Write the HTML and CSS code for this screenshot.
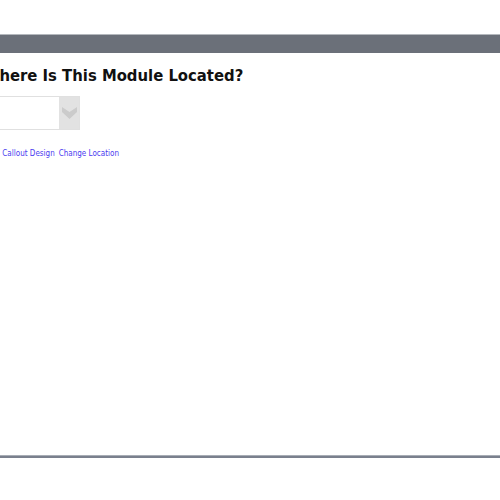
FILE: index.html
```html
<!DOCTYPE html>
<html lang="en">
<head>
    <meta charset="UTF-8">
    <title>Module Location</title>
    <link rel="stylesheet" href="styles.css">
</head>
<body>
    <div class="top-space"></div>
    <div class="bar"></div>
    <div class="content">
        <h2 class="title">Where Is This Module Located?</h2>
        <div class="select">
            <div class="select-field"></div>
            <div class="select-btn">
                <svg width="15" height="12" viewBox="0 0 15 12">
                    <path d="M0 0 L7.5 5 L15 0 L15 5 L7.5 12 L0 5 Z" fill="#cbcbcb"/>
                </svg>
            </div>
        </div>
        <div class="links">
            <a href="#">Edit</a>
            <a href="#">Callout Design</a>
            <a href="#">Change Location</a>
        </div>
    </div>
    <div class="bottom-line"></div>
</body>
</html>
```

FILE: styles.css
```css
body {
    margin: 0;
    background: #fff;
    font-family: "DejaVu Sans", Verdana, sans-serif;
    height: 500px;
    display: flex;
    flex-direction: column;
    overflow: hidden;
}
.top-space {
    height: 34px;
}
.bar {
    height: 18px;
    background: #6b7079;
    border-top: 1px solid #b4b8bd;
}
.content {
    margin-left: -17px;
    flex: 1;
}
.title {
    margin: 13px 0 0 0;
    font-family: "DejaVu Sans Condensed", "DejaVu Sans", sans-serif;
    font-stretch: condensed;
    font-size: 16.5px;
    font-weight: bold;
    color: #111;
    line-height: 20px;
    white-space: nowrap;
}
.select {
    display: flex;
    margin-top: 10px;
    width: 97px;
    height: 34px;
    border: 1px solid #e0e0e0;
    box-sizing: border-box;
}
.select-field {
    flex: 1;
}
.select-btn {
    width: 20px;
    background: #e2e2e2;
    display: flex;
    align-items: center;
    justify-content: center;
}
.links {
    margin-top: 19px;
    display: flex;
    justify-content: flex-end;
    width: 136px;
    gap: 4px;
    white-space: nowrap;
}
.links a {
    font-family: "DejaVu Sans Condensed", "DejaVu Sans", sans-serif;
    font-stretch: condensed;
    font-size: 8px;
    color: #4a3cf0;
    text-decoration: none;
}
.bottom-line {
    height: 2px;
    background: #7a808d;
    border-top: 1px solid #a8adb5;
    margin-bottom: 42px;
}
```
